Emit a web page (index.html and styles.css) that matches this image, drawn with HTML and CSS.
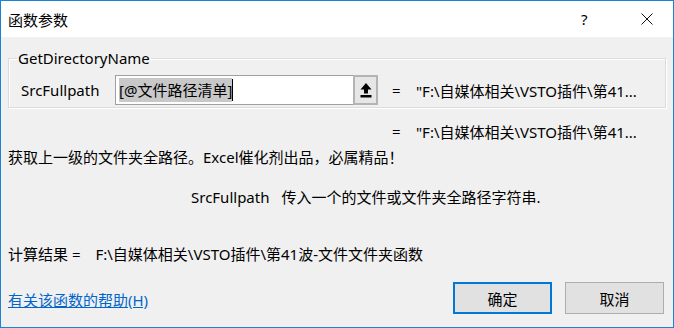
FILE: index.html
```html
<!DOCTYPE html>
<html>
<head>
  <meta charset="utf-8">
  <title>函数参数</title>
  <link rel="stylesheet" href="styles.css">
</head>
<body>
  <div class="window">
    <div class="titlebar">
      <span class="title">函数参数</span>
      <span class="help-btn">?</span>
      <span class="close-btn">
        <svg width="12" height="12" viewBox="0 0 12 12"><path d="M0.5 0.5 L11.5 11.5 M11.5 0.5 L0.5 11.5" stroke="#111" stroke-width="1" fill="none"/></svg>
      </span>
    </div>

    <div class="content">
      <fieldset class="args">
        <legend>GetDirectoryName</legend>
        <div class="arg-row">
          <label class="arg-name" for="src">SrcFullpath</label>
          <div class="arg-input">
            <span class="arg-text" id="src"><span class="sel">[@文件路径清单]</span><span class="caret"></span></span>
            <span class="ref-btn">
              <svg width="12" height="16" viewBox="0 0 12 16">
                <path d="M6 1 L11.5 7.5 L8 7.5 L8 11.5 L4 11.5 L4 7.5 L0.5 7.5 Z" fill="#000"/>
                <rect x="0.5" y="13" width="11" height="2.5" fill="#000"/>
              </svg>
            </span>
          </div>
          <span class="eq">=</span>
          <span class="arg-value">"F:\自媒体相关\VSTO插件\第41...</span>
        </div>
      </fieldset>

      <div class="formula-row">
        <span class="eq">=</span>
        <span class="arg-value">"F:\自媒体相关\VSTO插件\第41...</span>
      </div>

      <p class="desc">获取上一级的文件夹全路径。Excel催化剂出品，必属精品！</p>

      <p class="param-desc"><span class="param-name">SrcFullpath</span>传入一个的文件或文件夹全路径字符串.</p>

      <p class="result">计算结果 =<span class="result-val">F:\自媒体相关\VSTO插件\第41波-文件文件夹函数</span></p>

      <div class="footer">
        <a class="help-link" href="#">有关该函数的帮助(H)</a>
        <div class="buttons">
          <button class="btn btn-default">确定</button>
          <button class="btn">取消</button>
        </div>
      </div>
    </div>
  </div>
</body>
</html>
```

FILE: styles.css
```css
/* dialog window */
body {
  margin: 0;
  font-family: "Noto Sans", "Noto Sans CJK SC", sans-serif;
  font-size: 14px;
  color: #000;
}
.window {
  width: 674px;
  height: 328px;
  box-sizing: border-box;
  border: 1px solid #1c82d6;
  background-color: #f0f0f0;
  display: flex;
  flex-direction: column;
}
.titlebar {
  height: 36px;
  background-color: #fff;
  display: flex;
  align-items: center;
  padding-left: 7px;
}
.title {
  font-size: 15px;
  flex: 1;
}
.help-btn {
  font-size: 15px;
  width: 20px;
  margin-right: 40px;
}
.close-btn {
  display: flex;
  margin-right: 20px;
}
.content {
  padding: 0 7px;
  flex: 1;
  display: flex;
  flex-direction: column;
}
.args {
  margin: 11px 0 0;
  padding: 0 8px 0 12px;
  height: 60px;
  box-sizing: border-box;
  border: 1px solid #dcdcdc;
  box-shadow: inset 1px 1px 0 #fff, 1px 1px 0 #fff;
}
.args legend {
  font-size: 15px;
  padding: 0 1px;
  margin-left: -4px;
}
.arg-row {
  display: flex;
  align-items: center;
  margin-top: 7px;
}
.arg-name {
  width: 94px;
  font-size: 15px;
}
.arg-input {
  width: 263px;
  height: 30px;
  box-sizing: border-box;
  border: 1px solid #a0a0a0;
  border-right: none;
  background-color: #fff;
  display: flex;
  align-items: center;
}
.arg-text {
  flex: 1;
  padding-left: 3px;
  display: flex;
  align-items: center;
  font-size: 15px;
}
.sel {
  background-color: #c8c8c8;
  line-height: 24px;
}
.caret {
  width: 1px;
  height: 22px;
  background-color: #000;
}
.ref-btn {
  width: 25px;
  height: 30px;
  box-sizing: border-box;
  border: 2px solid #b4b4b4;
  background-color: #e6e6e6;
  display: flex;
  align-items: center;
  justify-content: center;
}
.eq {
  width: 22px;
  margin-left: 14px;
  font-size: 15px;
}
.arg-value {
  font-size: 15px;
  margin-left: 2px;
}
.formula-row {
  display: flex;
  margin-top: 12px;
  padding-left: 370px;
  height: 22px;
  align-items: center;
}
.desc {
  margin: 4px 0 0;
  font-size: 15px;
}
.param-desc {
  margin: 19px 0 0 183px;
  font-size: 15px;
}
.param-name {
  margin-right: 12px;
}
.result {
  margin: 36px 0 0;
  font-size: 15px;
}
.result-val {
  margin-left: 15px;
}
.footer {
  display: flex;
  align-items: center;
  justify-content: space-between;
  margin-top: 18px;
}
.help-link {
  color: #0066cc;
  font-size: 15px;
  text-decoration: underline;
  margin-top: 2px;
}
.buttons {
  display: flex;
  gap: 13px;
  margin-right: 2px;
}
.btn {
  width: 99px;
  height: 32px;
  font-family: inherit;
  font-size: 15px;
  background-color: #e1e1e1;
  border: 1px solid #adadad;
  padding: 0;
}
.btn-default {
  border: 2px solid #0078d7;
}
```
